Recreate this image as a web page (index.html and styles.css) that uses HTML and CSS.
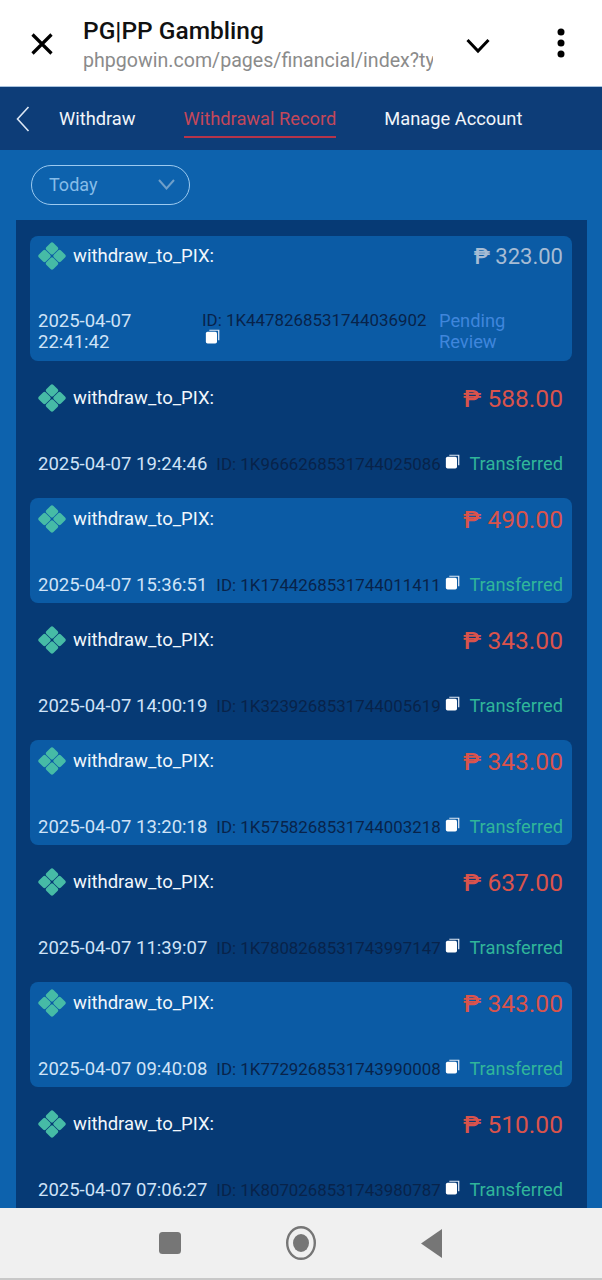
FILE: index.html
```html
<!DOCTYPE html>
<html lang="en">
<head>
<meta charset="utf-8">
<title>PG|PP Gambling</title>
<link rel="stylesheet" href="styles.css">
</head>
<body>
<svg class="defs" width="0" height="0" aria-hidden="true">
  <symbol id="pix" viewBox="0 0 30 30">
    <g fill="#46bba6" transform="rotate(45 15 15)">
      <rect x="4" y="4" width="10.600" height="10.600" rx="2.200"/>
      <rect x="15.400" y="4" width="10.600" height="10.600" rx="2.200"/>
      <rect x="4" y="15.400" width="10.600" height="10.600" rx="2.200"/>
      <rect x="15.400" y="15.400" width="10.600" height="10.600" rx="2.200"/>
    </g>
  </symbol>
  <symbol id="copy" viewBox="0 0 14 14">
    <path d="M4 1.600 L4 .6 H13.400 V10.400 H12.200 V1.600 Z" fill="#dfe9f5"/>
    <rect x=".8" y="2.600" width="10.400" height="11" rx="1.600" fill="#fff"/>
  </symbol>
</svg>
<div class="page">
  <header class="browser">
    <svg class="close-icon" width="24" height="24" viewBox="0 0 24 24"><path d="M2.500 2.500 L21.500 21.500 M21.500 2.500 L2.500 21.500" stroke="#000" stroke-width="3.200" fill="none"/></svg>
    <div class="browser-title">
      <div class="site-name">PG|PP Gambling</div>
      <div class="site-url">phpgowin.com/pages/financial/index?ty</div>
    </div>
    <svg class="chevron-icon" width="24" height="16" viewBox="0 0 24 16"><path d="M1.500 2 L12 13 L22.500 2" stroke="#000" stroke-width="3" fill="none"/></svg>
    <svg class="more-icon" width="8" height="30" viewBox="0 0 8 30"><circle cx="4" cy="4" r="3.500"/><circle cx="4" cy="15" r="3.500"/><circle cx="4" cy="26" r="3.500"/></svg>
  </header>

  <nav class="tabs">
    <svg class="back-icon" width="14" height="26" viewBox="0 0 14 26"><path d="M12.500 1 L1.500 13 L12.500 25" stroke="#dbe6f3" stroke-width="1.600" fill="none"/></svg>
    <span class="tab tab-first">Withdraw</span>
    <span class="tab tab-active">Withdrawal Record</span>
    <span class="tab tab-last">Manage Account</span>
  </nav>

  <div class="filter-bar">
    <div class="select">
      <span>Today</span>
      <svg width="17" height="11" viewBox="0 0 17 11"><path d="M1 1 L8.500 9.500 L16 1" stroke="#6f9fc9" stroke-width="2" fill="none"/></svg>
    </div>
  </div>

  <main class="panel">
    <section class="row card row-first">
      <div class="row-top">
        <div class="method"><svg class="pix"><use href="#pix"/></svg><span>withdraw_to_PIX:</span></div>
        <div class="amount pending-amount"><span class="peso">₱</span> 323.00</div>
      </div>
      <div class="row-bottom">
        <div class="date date-wrap">2025-04-07 22:41:42</div>
        <div class="id id-wrap">ID: 1K4478268531744036902 <svg class="copy"><use href="#copy"/></svg></div>
        <div class="status pending">Pending Review</div>
      </div>
    </section>

    <section class="row">
      <div class="row-top">
        <div class="method"><svg class="pix"><use href="#pix"/></svg><span>withdraw_to_PIX:</span></div>
        <div class="amount"><span class="peso">₱</span> 588.00</div>
      </div>
      <div class="row-bottom">
        <div class="date">2025-04-07 19:24:46</div>
        <div class="id">ID: 1K9666268531744025086 <svg class="copy"><use href="#copy"/></svg></div>
        <div class="status">Transferred</div>
      </div>
    </section>

    <section class="row card">
      <div class="row-top">
        <div class="method"><svg class="pix"><use href="#pix"/></svg><span>withdraw_to_PIX:</span></div>
        <div class="amount"><span class="peso">₱</span> 490.00</div>
      </div>
      <div class="row-bottom">
        <div class="date">2025-04-07 15:36:51</div>
        <div class="id">ID: 1K1744268531744011411 <svg class="copy"><use href="#copy"/></svg></div>
        <div class="status">Transferred</div>
      </div>
    </section>

    <section class="row">
      <div class="row-top">
        <div class="method"><svg class="pix"><use href="#pix"/></svg><span>withdraw_to_PIX:</span></div>
        <div class="amount"><span class="peso">₱</span> 343.00</div>
      </div>
      <div class="row-bottom">
        <div class="date">2025-04-07 14:00:19</div>
        <div class="id">ID: 1K3239268531744005619 <svg class="copy"><use href="#copy"/></svg></div>
        <div class="status">Transferred</div>
      </div>
    </section>

    <section class="row card">
      <div class="row-top">
        <div class="method"><svg class="pix"><use href="#pix"/></svg><span>withdraw_to_PIX:</span></div>
        <div class="amount"><span class="peso">₱</span> 343.00</div>
      </div>
      <div class="row-bottom">
        <div class="date">2025-04-07 13:20:18</div>
        <div class="id">ID: 1K5758268531744003218 <svg class="copy"><use href="#copy"/></svg></div>
        <div class="status">Transferred</div>
      </div>
    </section>

    <section class="row">
      <div class="row-top">
        <div class="method"><svg class="pix"><use href="#pix"/></svg><span>withdraw_to_PIX:</span></div>
        <div class="amount"><span class="peso">₱</span> 637.00</div>
      </div>
      <div class="row-bottom">
        <div class="date">2025-04-07 11:39:07</div>
        <div class="id">ID: 1K7808268531743997147 <svg class="copy"><use href="#copy"/></svg></div>
        <div class="status">Transferred</div>
      </div>
    </section>

    <section class="row card">
      <div class="row-top">
        <div class="method"><svg class="pix"><use href="#pix"/></svg><span>withdraw_to_PIX:</span></div>
        <div class="amount"><span class="peso">₱</span> 343.00</div>
      </div>
      <div class="row-bottom">
        <div class="date">2025-04-07 09:40:08</div>
        <div class="id">ID: 1K7729268531743990008 <svg class="copy"><use href="#copy"/></svg></div>
        <div class="status">Transferred</div>
      </div>
    </section>

    <section class="row">
      <div class="row-top">
        <div class="method"><svg class="pix"><use href="#pix"/></svg><span>withdraw_to_PIX:</span></div>
        <div class="amount"><span class="peso">₱</span> 510.00</div>
      </div>
      <div class="row-bottom">
        <div class="date">2025-04-07 07:06:27</div>
        <div class="id">ID: 1K8070268531743980787 <svg class="copy"><use href="#copy"/></svg></div>
        <div class="status">Transferred</div>
      </div>
    </section>
  </main>

  <footer class="android-nav">
    <svg width="22" height="22" viewBox="0 0 22 22"><rect width="22" height="22" rx="3.500" fill="#767676"/></svg>
    <svg width="30" height="34" viewBox="0 0 30 34"><ellipse cx="15" cy="17" rx="13.800" ry="15.800" fill="none" stroke="#767676" stroke-width="2.400"/><ellipse cx="15" cy="17" rx="8" ry="9" fill="#767676"/></svg>
    <svg width="21" height="29" viewBox="0 0 21 29"><path d="M21 0 V29 L0 14.500 Z" fill="#767676"/></svg>
  </footer>
</div>
</body>
</html>
```
FILE: styles.css
```css
* { box-sizing: border-box; }

html, body {
  margin: 0;
  padding: 0;
}

body {
  font-family: Roboto, "Liberation Sans", sans-serif;
  background: #f0f0f0;
}

.defs { position: absolute; }

.page {
  width: 602px;
  height: 1280px;
  display: flex;
  flex-direction: column;
  overflow: hidden;
}

/* Browser bar */
.browser {
  height: 87px;
  flex: none;
  background: #fff;
  display: flex;
  align-items: center;
  border-bottom: 1px solid #a9c3de;
  padding-left: 30px;
}

.close-icon { flex: none; margin-top: 2px; }

.browser-title {
  width: 350px;
  margin-left: 29px;
  padding-top: 6px;
  overflow: hidden;
  white-space: nowrap;
}

.site-name {
  font-size: 24.500px;
  font-weight: 500;
  line-height: 30px;
  color: #111;
}

.site-url {
  font-size: 19.600px;
  line-height: 30px;
  color: #8b8b8b;
  overflow: hidden;
}

.chevron-icon { margin-left: 33px; margin-top: 6px; flex: none; }
.more-icon { margin-left: 67px; flex: none; }

/* Tabs */
.tabs {
  height: 63px;
  flex: none;
  background: #0d3d78;
  display: flex;
  align-items: center;
  padding-left: 16px;
  color: #f1f5fa;
  font-size: 18.300px;
}

.tab {
  line-height: 34px;
  white-space: nowrap;
}

.tab-first { margin-left: 29px; }

.tab-active {
  margin-left: 48px;
  color: #c4475a;
  border-bottom: 2px solid #b5344a;
  margin-top: 2px;
}

.tab-last { margin-left: 48px; }

/* Filter */
.filter-bar {
  height: 70px;
  flex: none;
  background: #0d62ad;
  padding: 15px 0 0 31px;
}

.select {
  width: 159px;
  height: 40px;
  border: 1px solid #9ccaf0;
  border-radius: 20px;
  display: flex;
  align-items: center;
  justify-content: space-between;
  padding: 0 14px 2px 17px;
  color: #86bce8;
  font-size: 18px;
}

/* List */
.panel {
  flex: 1;
  min-height: 0;
  overflow: hidden;
  background: #063a75;
  margin: 0 15px 0 16px;
  padding: 16px 15px 0 14px;
  box-shadow: 0 0 0 16px #0d62ad;
  clip-path: inset(0 -16px 0 -16px);
  display: flex;
  flex-direction: column;
  gap: 16px;
}

.row {
  flex: none;
  padding: 0 9px 7px 8px;
  border-radius: 8px;
}

.card { background: #0b5ba5; }

.row-top {
  height: 42px;
  display: flex;
  align-items: center;
  justify-content: space-between;
  margin-bottom: 35px;
}

.row-first .row-top {
  height: 40px;
  margin-bottom: 35px;
}

.row-first { padding-bottom: 8px; }

.method {
  display: flex;
  align-items: center;
  gap: 7px;
  color: #f2f7fc;
  font-size: 18.500px;
}

.pix { width: 28px; height: 28px; flex: none; }

.amount {
  color: #d9534c;
  font-size: 24.600px;
  white-space: nowrap;
}

.peso { font-weight: 500; line-height: 1; }

.pending-amount { color: #a6bcd4; font-size: 22px; }

.row-bottom {
  display: flex;
  align-items: flex-start;
  justify-content: space-between;
  line-height: 21px;
}

.date {
  color: #cfe3f7;
  font-size: 18.500px;
  white-space: nowrap;
}

.date-wrap {
  width: 110px;
  white-space: normal;
}

.id {
  color: #08234a;
  font-size: 16.900px;
  white-space: nowrap;
  margin-left: 9px;
}

.id-wrap {
  width: 230px;
  white-space: normal;
  margin-left: 53px;
  line-height: 18px;
}

.copy {
  width: 15px;
  height: 15px;
  vertical-align: 1px;
}

.id-wrap .copy { margin-left: 3px; }

.status {
  color: #30b59a;
  font-size: 18.300px;
  white-space: nowrap;
  margin-left: auto;
  margin-top: -1px;
}

.pending {
  width: 124px;
  color: #3f86dc;
  white-space: normal;
  margin-left: 6px;
}

/* Android nav */
.android-nav {
  height: 72px;
  flex: none;
  background: #f0f0f0;
  display: flex;
  align-items: center;
  justify-content: center;
  gap: 105px;
  padding-right: 2px;
  border-bottom: 2px solid #c8c8c8;
}
```
